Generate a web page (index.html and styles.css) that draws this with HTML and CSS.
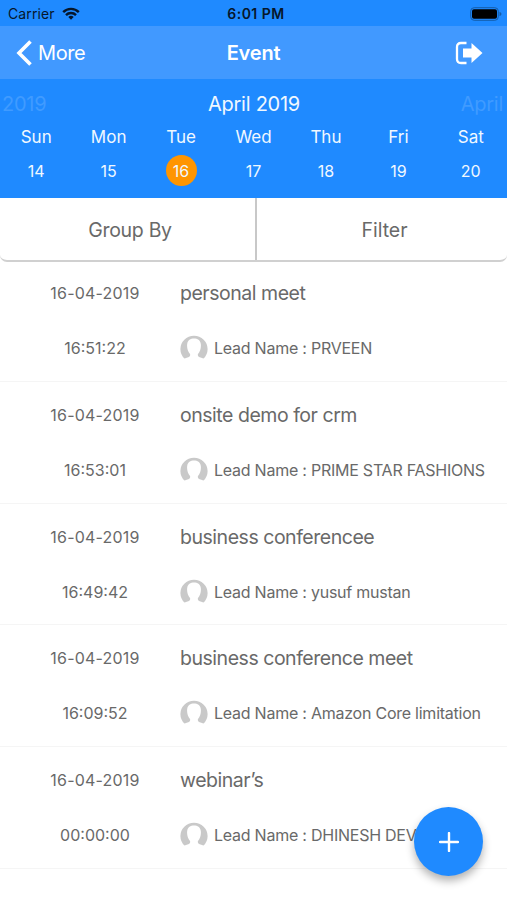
FILE: index.html
```html
<!DOCTYPE html>
<html lang="en">
<head>
    <meta charset="UTF-8">
    <meta name="viewport" content="width=device-width, initial-scale=1.0">
    <title>Event</title>
    <link rel="stylesheet" href="styles.css">
</head>
<body>
    <svg class="symbols" width="0" height="0">
        <symbol id="avatar" viewBox="0 0 28 24">
            <path fill="#c9c9c9" d="M4.500 23.500A13.600 13.200 0 1 1 23.500 23.500L19 22Q17.300 21 18 19C20.200 16.500 21.300 12.500 20.800 9C20.300 5 17.500 3.500 14 3.500S7.700 5 7.200 9C6.700 12.500 7.800 16.500 10 19Q10.700 21 9 22Z"/>
        </symbol>
    </svg>

    <div class="status-bar">
        <div class="carrier">
            <span>Carrier</span>
            <svg width="18" height="13" viewBox="0 0 18 13" fill="none" stroke="#06172b" stroke-width="2.4">
                <path d="M1.200 5.100a11 11 0 0 1 15.600 0"/>
                <path d="M4 8.100a7 7 0 0 1 10 0"/>
                <path d="M9 12.700L6.300 10a3.900 3.900 0 0 1 5.400 0Z" fill="#06172b" stroke="none"/>
            </svg>
        </div>
        <div class="clock">6:01 PM</div>
        <svg class="battery" width="32" height="14" viewBox="0 0 32 14">
            <rect x="0.700" y="0.700" width="27.600" height="12.600" rx="3.500" fill="none" stroke="#155da9"/>
            <rect x="2" y="2.300" width="25" height="9.400" rx="2" fill="#000"/>
            <path d="M29.500 4.700q2 .7 2 2.300t-2 2.300Z" fill="#155da9"/>
        </svg>
    </div>

    <div class="nav-bar">
        <div class="back">
            <svg width="17" height="28" viewBox="0 0 17 28">
                <path d="M14.500 2.500L3 14l11.500 11.500" fill="none" stroke="#fff" stroke-width="3.600"/>
            </svg>
            <span>More</span>
        </div>
        <div class="title">Event</div>
        <svg class="logout" width="28" height="24" viewBox="0 0 28 24">
            <path d="M11.500 2H6Q2 2 2 6v12q0 4 4 4h5.500" fill="none" stroke="#fff" stroke-width="2.300"/>
            <path d="M8 7.500h8.500V2L27.500 12L16.500 22v-5.500H8Z" fill="#fff"/>
        </svg>
    </div>

    <div class="calendar">
        <div class="months">
            <span class="faded">2019</span>
            <span class="current">April 2019</span>
            <span class="faded next">April</span>
        </div>
        <div class="week">
            <div class="day"><span>Sun</span><span class="num">14</span></div>
            <div class="day"><span>Mon</span><span class="num">15</span></div>
            <div class="day"><span>Tue</span><span class="num active">16</span></div>
            <div class="day"><span>Wed</span><span class="num">17</span></div>
            <div class="day"><span>Thu</span><span class="num">18</span></div>
            <div class="day"><span>Fri</span><span class="num">19</span></div>
            <div class="day"><span>Sat</span><span class="num">20</span></div>
        </div>
    </div>

    <div class="tools">
        <div class="tool group">Group By</div>
        <div class="tool filter">Filter</div>
    </div>

    <div class="events">
        <div class="event">
            <div class="when"><span class="date">16-04-2019</span><span>16:51:22</span></div>
            <div class="what">
                <span class="name">personal meet</span>
                <div class="lead"><svg width="28" height="24"><use href="#avatar"/></svg><span>Lead Name : PRVEEN</span></div>
            </div>
        </div>
        <div class="event">
            <div class="when"><span class="date">16-04-2019</span><span>16:53:01</span></div>
            <div class="what">
                <span class="name">onsite demo for crm</span>
                <div class="lead"><svg width="28" height="24"><use href="#avatar"/></svg><span>Lead Name : PRIME STAR FASHIONS</span></div>
            </div>
        </div>
        <div class="event">
            <div class="when"><span class="date">16-04-2019</span><span>16:49:42</span></div>
            <div class="what">
                <span class="name">business conferencee</span>
                <div class="lead"><svg width="28" height="24"><use href="#avatar"/></svg><span>Lead Name : yusuf mustan</span></div>
            </div>
        </div>
        <div class="event">
            <div class="when"><span class="date">16-04-2019</span><span>16:09:52</span></div>
            <div class="what">
                <span class="name">business conference meet</span>
                <div class="lead"><svg width="28" height="24"><use href="#avatar"/></svg><span>Lead Name : Amazon Core limitation</span></div>
            </div>
        </div>
        <div class="event">
            <div class="when"><span class="date">16-04-2019</span><span>00:00:00</span></div>
            <div class="what">
                <span class="name">webinar’s</span>
                <div class="lead"><svg width="28" height="24"><use href="#avatar"/></svg><span>Lead Name : DHINESH DEV</span></div>
            </div>
        </div>
    </div>

    <div class="add">
        <svg width="20" height="20" viewBox="0 0 20 20">
            <path d="M10 1v18M1 10h18" stroke="#fff" stroke-width="2.400" stroke-linecap="round"/>
        </svg>
    </div>
</body>
</html>
```

FILE: styles.css
```css
* {
    box-sizing: border-box;
}

body {
    margin: 0;
    height: 900px;
    overflow: hidden;
    background-color: #fff;
    font-family: Inter, "Liberation Sans", sans-serif;
    color: #696969;
    white-space: nowrap;
}

svg {
    display: block;
    flex-shrink: 0;
}

.symbols {
    position: absolute;
}

.status-bar {
    display: grid;
    grid-template-columns: 1fr auto 1fr;
    align-items: center;
    height: 26px;
    padding: 1px 5px 0 8px;
    background-color: #1f8aff;
    color: #06172b;
    font-size: 14px;
}

.carrier {
    display: flex;
    align-items: center;
    gap: 7px;
    letter-spacing: 0.1px;
}

.clock {
    padding-left: 2px;
    font-weight: 600;
    letter-spacing: 0.5px;
}

.battery {
    justify-self: end;
}

.nav-bar {
    display: grid;
    grid-template-columns: 1fr auto 1fr;
    align-items: center;
    height: 53px;
    padding: 0 24px 0 16px;
    background-color: #4199ff;
    color: #fff;
    font-size: 20px;
    letter-spacing: -0.4px;
}

.back {
    display: flex;
    align-items: center;
    gap: 5px;
}

.title {
    padding-left: 8px;
    font-weight: 600;
    letter-spacing: -0.2px;
}

.logout {
    justify-self: end;
}

.calendar {
    height: 119px;
    padding-top: 13px;
    background-color: #1f8aff;
    color: #f0f8ff;
}

.months {
    display: grid;
    grid-template-columns: 1fr auto 1fr;
    padding: 0 4px 0 2px;
    font-size: 20px;
    line-height: 24px;
    letter-spacing: -0.25px;
}

.current {
    padding-left: 3px;
}

.faded {
    color: #409bff;
}

.next {
    text-align: right;
}

.week {
    display: grid;
    grid-template-columns: repeat(7, 1fr);
    margin-top: 11px;
    font-size: 17px;
    line-height: 20px;
}

.day {
    display: flex;
    flex-direction: column;
    align-items: center;
    gap: 8px;
}

.num {
    width: 31px;
    height: 31px;
    border-radius: 50%;
    font-size: 16px;
    line-height: 32px;
    text-align: center;
}

.active {
    background-color: #ff9500;
}

.tools {
    display: flex;
    height: 64px;
    border-bottom: 2px solid #d0d0d0;
    border-radius: 0 0 7px 7px;
    font-size: 19.5px;
    letter-spacing: -0.3px;
}

.tool {
    flex: 1;
    display: flex;
    align-items: center;
    justify-content: center;
    padding: 1px 0 0 5px;
}

.group {
    flex: 0 0 257px;
    border-right: 2px solid #c8c8c8;
}

.filter {
    letter-spacing: 0;
}

.events {
    margin-top: -2px;
}

.event {
    display: flex;
    height: 121.8px;
    padding-top: 21px;
    border-bottom: 1px solid #f5f5f5;
}

.when {
    display: flex;
    flex-direction: column;
    align-items: center;
    width: 180px;
    padding-left: 10px;
    gap: 31px;
    font-size: 16px;
    line-height: 24px;
}

.date {
    letter-spacing: 0.2px;
}

.what {
    display: flex;
    flex-direction: column;
    gap: 31px;
}

.name {
    font-size: 19.5px;
    line-height: 24px;
    letter-spacing: -0.47px;
}

.lead {
    display: flex;
    align-items: center;
    gap: 6px;
    font-size: 16px;
    line-height: 24px;
    letter-spacing: -0.24px;
}

.lead svg {
    margin-top: -2px;
}

.add {
    position: fixed;
    right: 24px;
    bottom: 24px;
    display: flex;
    align-items: center;
    justify-content: center;
    width: 69px;
    height: 69px;
    border-radius: 50%;
    background-color: #1f8aff;
    box-shadow: 0 5px 8px rgba(0, 0, 0, 0.3);
}
```
